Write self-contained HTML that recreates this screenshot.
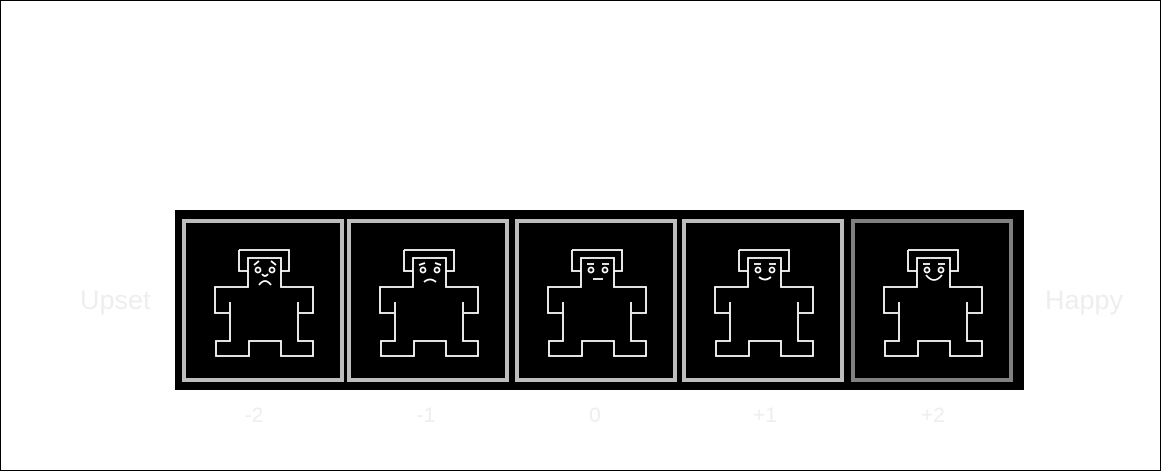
<!DOCTYPE html>
<html><head><style>
html,body{margin:0;padding:0;background:#fff;}
body{width:1161px;height:471px;position:relative;overflow:hidden;font-family:"Liberation Sans",Arial,sans-serif;}
.frame{position:absolute;left:0;top:0;width:1159px;height:469px;border:1px solid #000;}
.strip{position:absolute;left:175px;top:210px;width:849px;height:180px;background:#000;}
.box{position:absolute;top:219px;width:154px;height:155px;border:4px solid #bdbdbd;background:#000;}
.lbl{position:absolute;color:#eeeeee;font-size:27px;top:285px;}
.num{position:absolute;color:#eeeeee;font-size:21px;top:404px;width:60px;text-align:center;}
svg{position:absolute;left:-4px;top:-4px;}
</style></head><body>
<div class="frame"></div>
<div class="lbl" style="left:80px">Upset</div>
<div class="lbl" style="left:1045px">Happy</div>
<div class="strip"></div>

<div class="box" style="left:182px"><svg width="162" height="163" fill="none" stroke="#fff" stroke-width="1.8">
<path d="M57,31H107V52H99V68H131V94H117 M116,83V122H131V137H99V122H67V137H34V122H48V83 M47,94H33V68H66V52H57V31 M66,52V39H99V52"/>
<circle cx="76" cy="51" r="2.5"/><circle cx="90" cy="51" r="2.5"/>
<path d="M72,46L77,42 M94,46L89,42 M80,55Q83,59 86,55 M77,66Q83,58 89,66"/></svg></div>

<div class="box" style="left:347px"><svg width="162" height="163" fill="none" stroke="#fff" stroke-width="1.8">
<path d="M57,31H107V52H99V68H131V94H117 M116,83V122H131V137H99V122H67V137H34V122H48V83 M47,94H33V68H66V52H57V31 M66,52V39H99V52"/>
<circle cx="76" cy="51" r="2.5"/><circle cx="90" cy="51" r="2.5"/>
<path d="M72,46L78,44 M94,46L88,44 M77,63Q83,58 89,63"/></svg></div>

<div class="box" style="left:515px"><svg width="162" height="163" fill="none" stroke="#fff" stroke-width="1.8">
<path d="M57,31H107V52H99V68H131V94H117 M116,83V122H131V137H99V122H67V137H34V122H48V83 M47,94H33V68H66V52H57V31 M66,52V39H99V52"/>
<circle cx="76" cy="51" r="2.5"/><circle cx="90" cy="51" r="2.5"/>
<path d="M72,45H79 M87,45H94 M78,60H88"/></svg></div>

<div class="box" style="left:682px"><svg width="162" height="163" fill="none" stroke="#fff" stroke-width="1.8">
<path d="M57,31H107V52H99V68H131V94H117 M116,83V122H131V137H99V122H67V137H34V122H48V83 M47,94H33V68H66V52H57V31 M66,52V39H99V52"/>
<circle cx="76" cy="51" r="2.5"/><circle cx="90" cy="51" r="2.5"/>
<path d="M72,45H79 M87,45H94 M77,58Q83,63 89,58"/></svg></div>

<div class="box" style="left:851px;border-color:#808080"><svg width="162" height="163" fill="none" stroke="#fff" stroke-width="1.8">
<path d="M57,31H107V52H99V68H131V94H117 M116,83V122H131V137H99V122H67V137H34V122H48V83 M47,94H33V68H66V52H57V31 M66,52V39H99V52"/>
<circle cx="76" cy="51" r="2.5"/><circle cx="90" cy="51" r="2.5"/>
<path d="M72,45H79 M87,45H94 M75,56Q83,66 91,56"/></svg></div>

<div class="num" style="left:224px">-2</div>
<div class="num" style="left:396px">-1</div>
<div class="num" style="left:565px">0</div>
<div class="num" style="left:735px">+1</div>
<div class="num" style="left:903px">+2</div>
</body></html>
